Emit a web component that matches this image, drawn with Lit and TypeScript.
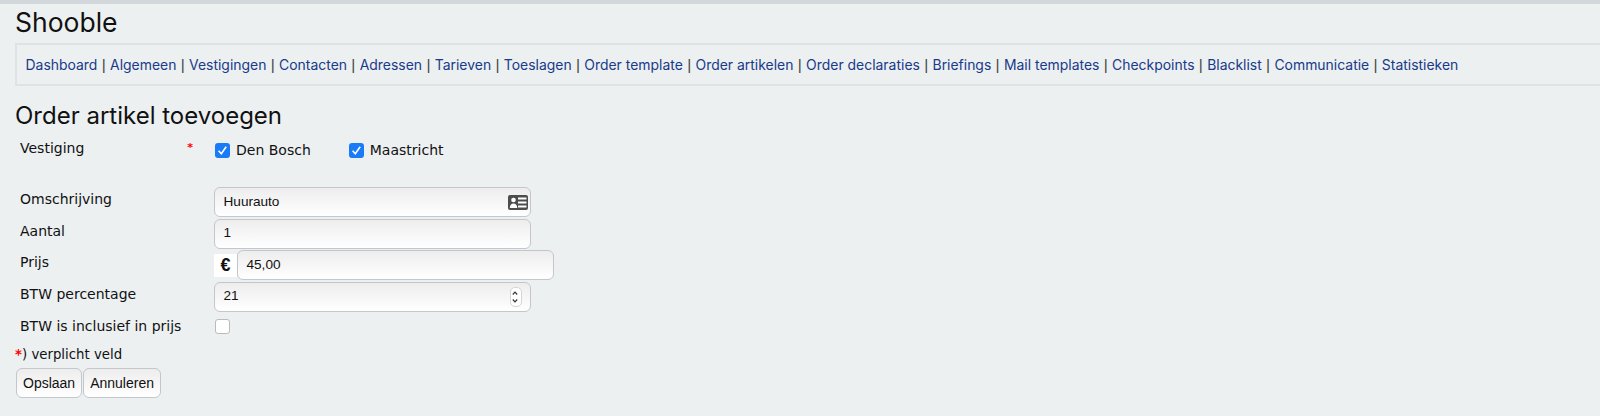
import { LitElement, html, css } from 'lit';
import { customElement } from 'lit/decorators.js';

const LINKS = [
  'Dashboard', 'Algemeen', 'Vestigingen', 'Contacten', 'Adressen', 'Tarieven', 'Toeslagen',
  'Order template', 'Order artikelen', 'Order declaraties', 'Briefings', 'Mail templates',
  'Checkpoints', 'Blacklist', 'Communicatie', 'Statistieken',
];

const check = html`<svg viewBox="0 0 15 15" width="15" height="15"><path d="M3.600 7.800 6.300 10.800 11.200 3.800" fill="none" stroke="#fff" stroke-width="1.600"/></svg>`;

const cardIcon = html`<svg class="card" viewBox="0 0 20 15" width="20" height="15">
  <rect width="20" height="15" rx="2" fill="#4d4d4d"/>
  <rect x="10" y="2.500" width="8.500" height="2" fill="#fff"/>
  <rect x="10" y="6.500" width="8.500" height="2" fill="#fff"/>
  <rect x="10" y="10.500" width="8.500" height="2" fill="#fff"/>
  <circle cx="5.500" cy="5" r="2.300" fill="#fff"/>
  <path d="M1.800 13c0-3 1.500-4.600 3.700-4.600s3.700 1.600 3.700 4.600z" fill="#fff"/>
</svg>`;

const spinner = html`<span class="spin"><svg viewBox="0 0 10 18" width="10" height="18">
  <path d="M2.800 6.500 5 4.200 7.200 6.500M2.800 11.500 5 13.800 7.200 11.500" fill="none" stroke="#333" stroke-width="1.200"/>
</svg></span>`;

@customElement('app-root')
export class AppRoot extends LitElement {
  static styles = css`
    :host {
      display: block;
      height: 416px;
      overflow: hidden;
      background: #ecf0f1;
      border-top: 4px solid #d2d7dc;
      box-sizing: border-box;
      color: #111;
      font-family: "DejaVu Sans", sans-serif;
      font-size: 14px;
    }
    .page {
      padding-left: 15px;
    }
    h1, h2 {
      margin: 0;
      font-family: Inter, sans-serif;
      font-weight: 400;
    }
    h1 {
      font-size: 26.500px;
      line-height: 30px;
      height: 39px;
      padding-top: 3px;
      box-sizing: border-box;
    }
    nav {
      height: 43px;
      box-sizing: border-box;
      border: 2px solid #dfe3e5;
      border-right: 0;
      padding-left: 8.500px;
      display: flex;
      align-items: center;
      white-space: pre;
      font-family: Inter, sans-serif;
      font-size: 13.950px;
    }
    nav a {
      color: #1a3a8a;
    }
    nav span {
      color: #444;
      font-family: "Liberation Sans", sans-serif;
      font-size: 15.500px;
    }
    h2 {
      margin-top: 16px;
      font-size: 24px;
      line-height: 28px;
    }
    .row {
      display: flex;
      align-items: flex-start;
      margin-left: 5px;
    }
    .label {
      width: 194px;
      flex: none;
      display: flex;
      justify-content: space-between;
      padding-right: 21px;
      box-sizing: border-box;
      line-height: 20px;
    }
    .req {
      color: #f00;
      font-size: 11px;
      font-weight: 700;
    }
    .vest {
      margin-top: 8px;
      height: 49px;
    }
    .choice {
      display: flex;
      align-items: center;
      gap: 6px;
      margin-left: 1px;
      margin-right: 37px;
      height: 20px;
      margin-top: 2px;
    }
    .box {
      width: 15px;
      height: 15px;
      border-radius: 3px;
      box-sizing: border-box;
      background: #1a7bf7;
      display: block;
    }
    .box.off {
      background: #fff;
      border: 1px solid #bbb;
      margin: 5px 0 0 1px;
    }
    .box svg {
      display: block;
    }
    .field {
      margin-bottom: 1.670px;
    }
    .field .label, .last .label {
      padding-top: 2px;
    }
    .input {
      width: 317px;
      height: 30px;
      box-sizing: border-box;
      border: 1.500px solid #c3c7cb;
      border-radius: 6px;
      background: linear-gradient(#ededed, #fff);
      padding: 0 2px 0 8.500px;
      display: flex;
      align-items: center;
      justify-content: space-between;
      font-family: "Liberation Sans", sans-serif;
      font-size: 13.600px;
    }
    .input .txt {
      margin-top: -2px;
    }
    .euro {
      width: 23px;
      height: 23px;
      margin-top: 4px;
      flex: none;
      background: #fff;
      font-family: "Liberation Sans", sans-serif;
      font-weight: 700;
      font-size: 18px;
      display: flex;
      align-items: center;
      justify-content: center;
      box-sizing: border-box;
    }
    .spin {
      width: 10px;
      height: 18px;
      background: #fff;
      border: 1px solid #d5d5d5;
      border-radius: 5px;
      display: block;
      margin-right: 6px;
    }
    .spin svg {
      display: block;
      margin: 0 -1px;
    }
    .note {
      margin-top: 9px;
      line-height: 20px;
      font-size: 13.300px;
    }
    .note span {
      color: #f00;
      font-weight: 700;
    }
    .buttons {
      display: flex;
      margin-top: 3px;
      margin-left: 1px;
      gap: 1px;
    }
    button {
      height: 30px;
      box-sizing: border-box;
      padding: 0 6px;
      margin: 0;
      border: 1.500px solid #c3c7cb;
      border-radius: 6px;
      background: linear-gradient(#ededed, #fff);
      color: #111;
      font-family: "Liberation Sans", sans-serif;
      font-size: 14px;
    }
  `;

  render() {
    return html`
      <div class="page">
        <h1>Shooble</h1>
        <nav>${LINKS.map((l, i) => html`${i ? html`<span> | </span>` : ''}<a>${l}</a>`)}</nav>
        <h2>Order artikel toevoegen</h2>
        <div class="row vest">
          <div class="label">Vestiging<span class="req">*</span></div>
          <div class="choice"><span class="box">${check}</span>Den Bosch</div>
          <div class="choice"><span class="box">${check}</span>Maastricht</div>
        </div>
        <div class="row field">
          <div class="label">Omschrijving</div>
          <div class="input"><span class="txt">Huurauto</span>${cardIcon}</div>
        </div>
        <div class="row field">
          <div class="label">Aantal</div>
          <div class="input"><span class="txt">1</span></div>
        </div>
        <div class="row field">
          <div class="label">Prijs</div>
          <div class="euro">€</div>
          <div class="input"><span class="txt">45,00</span></div>
        </div>
        <div class="row field">
          <div class="label">BTW percentage</div>
          <div class="input"><span class="txt">21</span>${spinner}</div>
        </div>
        <div class="row last">
          <div class="label">BTW is inclusief in prijs</div>
          <span class="box off"></span>
        </div>
        <div class="note"><span>*</span>) verplicht veld</div>
        <div class="buttons"><button>Opslaan</button><button>Annuleren</button></div>
      </div>
    `;
  }
}
